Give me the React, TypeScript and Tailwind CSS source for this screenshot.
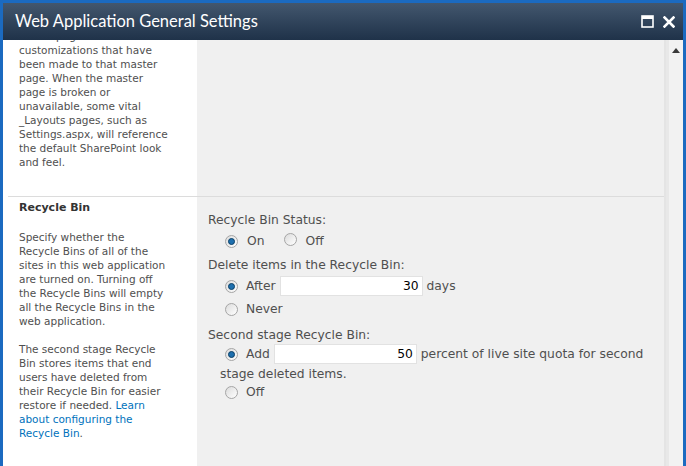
import React from 'react';

const Radio: React.FC<{ checked?: boolean }> = ({ checked }) => (
  <span className="inline-flex h-[13px] w-[13px] shrink-0 items-center justify-center rounded-full border border-[#a5a5a5] bg-gradient-to-br from-[#dcdcdc] to-[#ffffff]">
    {checked && <span className="h-[7px] w-[7px] rounded-full border border-[#0b3f66] bg-[#1d6fae]" />}
  </span>
);

const Lines: React.FC<{ lines: React.ReactNode[] }> = ({ lines }) => (
  <div>
    {lines.map((l, i) => (
      <div key={i} className="h-[14px] whitespace-nowrap leading-[14px]">{l}</div>
    ))}
  </div>
);

export default function App() {
  return (
    <div
      className="flex h-[466px] w-[686px] flex-col overflow-hidden border-x-[3px] border-t-[3px] border-[#1b6ac0] bg-[#f0f0f0]"
      style={{ fontFamily: '"DejaVu Sans", Verdana, sans-serif' }}
    >
      {/* title bar */}
      <div className="flex h-[37px] shrink-0 items-center justify-between bg-gradient-to-b from-[#43576e] to-[#1f3249] pl-[12px] pr-[8px]">
        <span className="text-[16.5px] text-white" style={{ fontFamily: 'Lato, "Noto Sans", sans-serif' }}>
          Web Application General Settings
        </span>
        <div className="flex items-center gap-[9px]">
          <svg width="13" height="13" viewBox="0 0 13 13">
            <rect x="1" y="1" width="11" height="11" fill="none" stroke="#ffffff" strokeWidth="1.6" />
            <rect x="1" y="1" width="11" height="3" fill="#ffffff" />
          </svg>
          <svg width="12" height="12" viewBox="0 0 12 12">
            <path d="M1.5 1.5 L10.5 10.5 M10.5 1.5 L1.5 10.5" stroke="#ffffff" strokeWidth="2.6" strokeLinecap="square" />
          </svg>
        </div>
      </div>

      <div className="flex min-h-0 flex-1">
        {/* main */}
        <div className="flex-1 overflow-hidden text-[#4f4f4f]">
          {/* first section (scrolled) */}
          <div className="mt-[-11px] flex">
            <div className="w-[194px] shrink-0 bg-white pb-[27px] pl-[16px] text-[10.5px]">
              <Lines
                lines={[
                  'masterpage and show the',
                  'customizations that have',
                  'been made to that master',
                  'page. When the master',
                  'page is broken or',
                  'unavailable, some vital',
                  '_Layouts pages, such as',
                  'Settings.aspx, will reference',
                  'the default SharePoint look',
                  'and feel.',
                ]}
              />
            </div>
            <div className="flex-1" />
          </div>

          <div className="flex">
            <div className="w-[194px] shrink-0 bg-white pl-[5px]">
              <div className="h-px bg-[#dcdcdc]" />
            </div>
            <div className="h-px flex-1 bg-[#dcdcdc]" />
          </div>

          {/* recycle bin section */}
          <div className="flex">
            <div className="h-[300px] w-[194px] shrink-0 bg-white pl-[16px] pt-[4px] text-[10.5px]">
              <div className="h-[14px] text-[11px] font-bold leading-[14px] text-[#333333]">Recycle Bin</div>
              <div className="mt-[15px]">
                <Lines
                  lines={[
                    'Specify whether the',
                    'Recycle Bins of all of the',
                    'sites in this web application',
                    'are turned on. Turning off',
                    'the Recycle Bins will empty',
                    'all the Recycle Bins in the',
                    'web application.',
                  ]}
                />
              </div>
              <div className="mt-[14px]">
                <Lines
                  lines={[
                    'The second stage Recycle',
                    'Bin stores items that end',
                    'users have deleted from',
                    'their Recycle Bin for easier',
                    <>
                      restore if needed. <span className="text-[#0072bc]">Learn</span>
                    </>,
                    <span className="text-[#0072bc]">about configuring the</span>,
                    <>
                      <span className="text-[#0072bc]">Recycle Bin</span>.
                    </>,
                  ]}
                />
              </div>
            </div>

            <div className="flex-1 pl-[11px] pt-[16px] text-[12.3px] leading-[15px]">
              <div>Recycle Bin Status:</div>
              <div className="mt-[6px] flex h-[15px] items-center pl-[17px]">
                <Radio checked />
                <span className="ml-[9px]">On</span>
                <span className="ml-[20px]">
                  <Radio />
                </span>
                <span className="ml-[8px]">Off</span>
              </div>

              <div className="mt-[9px]">Delete items in the Recycle Bin:</div>
              <div className="mt-[3px] flex h-[20px] items-center pl-[17px]">
                <Radio checked />
                <span className="ml-[8px]">After</span>
                <span className="ml-[4px] flex h-[20px] w-[143px] items-center justify-end border border-[#e2e2e2] bg-white pr-[3px] text-black">
                  30
                </span>
                <span className="ml-[4px]">days</span>
              </div>
              <div className="mt-[6px] flex h-[15px] items-center pl-[17px]">
                <Radio />
                <span className="ml-[8px]">Never</span>
              </div>

              <div className="mt-[11px]">Second stage Recycle Bin:</div>
              <div className="mt-[1px] flex h-[20px] items-center pl-[17px]">
                <Radio checked />
                <span className="ml-[8px]">Add</span>
                <span className="ml-[4px] flex h-[20px] w-[143px] items-center justify-end border border-[#e2e2e2] bg-white pr-[3px] text-black">
                  50
                </span>
                <span className="ml-[4px] whitespace-nowrap">percent of live site quota for second</span>
              </div>
              <div className="mt-[3px] pl-[12px]">stage deleted items.</div>
              <div className="mt-[3px] flex h-[15px] items-center pl-[17px]">
                <Radio />
                <span className="ml-[8px]">Off</span>
              </div>
            </div>
          </div>
        </div>

        {/* scrollbar */}
        <div className="flex w-[19px] shrink-0 border-l-[2px] border-[#e4e4e4] bg-[#f2f2f2]">
          <div className="w-[3px] bg-[#e8e8e8]" />
          <div className="flex flex-1 justify-center pt-[8px]">
            <svg width="8" height="5" viewBox="0 0 8 5">
              <path d="M0 5 L4 0 L8 5 Z" fill="#3a3a3a" />
            </svg>
          </div>
        </div>
      </div>
    </div>
  );
}
